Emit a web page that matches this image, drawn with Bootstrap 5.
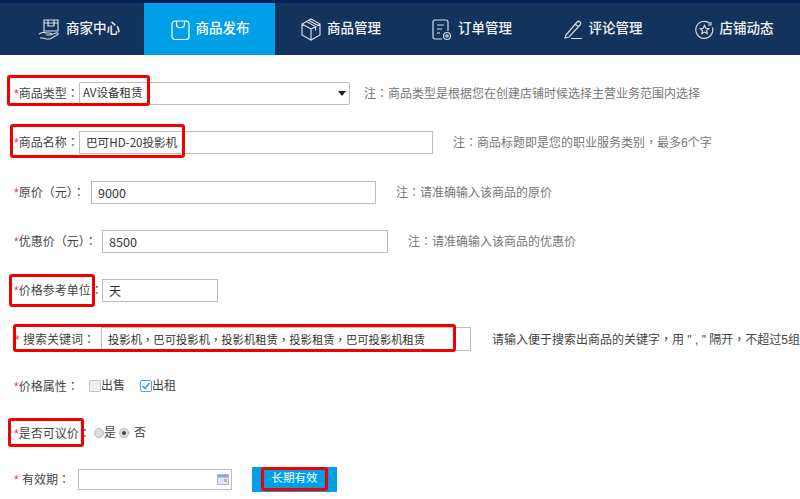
<!DOCTYPE html>
<html>
<head>
<meta charset="utf-8">
<title>商品发布</title>
<link rel="stylesheet" href="https://cdn.jsdelivr.net/npm/bootstrap@5.3.0/dist/css/bootstrap.min.css">
<style>
html,body{height:499px;overflow:hidden;background:#fff}
body{font-family:"Liberation Sans","Noto Sans CJK SC",sans-serif;font-size:12px;color:#333}
.pn{font-family:"Noto Sans CJK TC",sans-serif}
.topbar{height:55px;background:#12335c;border-top:3px solid #071f57;padding-left:13px;flex-wrap:nowrap;width:800px;overflow:hidden}
.topbar .nav-item{flex:0 0 131px}
.topbar .nav-link{height:52px;padding:1px 0 0 1px;color:#f2f5f8;font-size:13.5px;font-weight:500;display:flex;align-items:center;justify-content:center;gap:6px;white-space:nowrap}
.topbar .nav-link.active{background:#00a0e9;color:#fff}
.topbar svg{fill:none;stroke:#d5dce5;stroke-width:1.2;flex:none}
.topbar .active svg{stroke:#fff}
.sheet{position:relative;padding-top:26px;height:444px}
.line{height:24px;margin-bottom:25px;white-space:nowrap}
.line.shift1{margin-bottom:26px}
.line.gap23{margin-bottom:23px}
.line.gap22{margin-bottom:22px}
.tag{color:#444;flex:none;font-size:12px}
.tag i{color:#e4393c;font-style:normal}
.l65{width:79px;padding-left:14px}
.l77{width:91px;padding-left:14px}
.l88{width:102px;padding-left:14px}
.l87{width:101px;padding-left:15px}
.lab-attr{width:89px;padding-left:14px}
.lab-neg{width:94px;padding-left:14px}
.lab-exp{width:78px;padding-left:14px}
.field{height:23px;border:1px solid #bdbdbd;border-radius:0;padding:0 6px;font-size:12px;color:#333;background:#fff;flex:none;font-family:"Noto Sans CJK SC",sans-serif;box-shadow:none}
.w-type{width:271px;padding:0 3px;font-size:11.5px;border-radius:2px}
.w-name{width:354px;font-size:11.6px}
.w-orig{width:285px;font-size:12.6px}
.w-disc{width:286px;font-size:12.6px}
.w-unit{width:116px}
.w-key{width:370px;height:24px;font-size:11.33px;font-family:"Noto Sans CJK TC",sans-serif}
.w-exp{width:154px;height:21px;position:relative}
.hint{color:#777;margin-left:14px}
.hint-n{margin-left:20px}
.hint-k{margin-left:21px;color:#444}
.selwrap{position:relative;flex:none}
.selwrap select{appearance:none;display:block}
.selwrap b{position:absolute;right:4px;top:9px;border:4px solid transparent;border-top:5px solid #222;border-bottom:0}
.tick{width:12px;height:12px;border:1px solid #c4c4c4;background:#efefef;border-radius:2px;flex:none;display:block}
.tick.on{border-color:#4aa8e0;background:#fff}
.tick svg{display:block}
.opt{display:flex;align-items:center;color:#444}
.opt-rent{margin-left:15px}
.dot{width:10px;height:10px;border-radius:50%;background:#ddd;border:1px solid #bbb;flex:none;display:flex;align-items:center;justify-content:center}
.dot.on::after{content:"";width:4px;height:4px;border-radius:50%;background:#444}
.opt-no{margin-left:3px}
.no-txt{margin-left:5px}
.cal{position:absolute;right:2px;top:4px}
.long-btn{margin-left:20px;width:85px;height:25px;background:#00a0e9;color:#fff;border:0;border-radius:0;font-size:11.5px;padding:0;--bs-btn-hover-bg:#00a0e9}
.redbox{position:absolute;border:3px solid #f00000;border-radius:3px;pointer-events:none}
.r1{left:7px;top:20px;width:143px;height:31px}
.r2{left:10px;top:69px;width:175px;height:34px}
.r3{left:9px;top:219px;width:86px;height:33px}
.r4{left:13px;top:269px;width:443px;height:28px}
.r5{left:8px;top:363px;width:76px;height:29px}
.r6{left:261px;top:412px;width:67px;height:24px}
</style>
</head>
<body>
<ul class="nav topbar">
  <li class="nav-item"><a class="nav-link" href="#">
    <svg width="22" height="24" viewBox="0 0 22 24"><path d="M6 2h14v11H6zM6 5h14M10 2v6h6V2"/><path d="M1 16c3-2 5-2 7-1h4c2 0 2 2 0 2H8M12 17l6-2c2-.5 3 1 1 2l-7 4H8l-3-1H2"/></svg>
    <span>商家中心</span></a></li>
  <li class="nav-item"><a class="nav-link active" href="#">
    <svg width="19" height="22" viewBox="0 0 19 22"><rect x="1" y="2" width="17" height="18.500" rx="3"/><path d="M5.500 2v3c0 5 8 5 8 0V2"/></svg>
    <span>商品发布</span></a></li>
  <li class="nav-item"><a class="nav-link" href="#">
    <svg width="20" height="23" viewBox="0 0 20 23"><path d="M10 1l9 5v11l-9 5-9-5V6zM1 6l9 5 9-5M10 11v11M5.500 3.500l9 5v4M8 2.500l9 5"/></svg>
    <span>商品管理</span></a></li>
  <li class="nav-item"><a class="nav-link" href="#">
    <svg width="20" height="22" viewBox="0 0 20 22"><path d="M10 20H3a2 2 0 0 1-2-2V3a2 2 0 0 1 2-2h11a2 2 0 0 1 2 2v9M5 6h7M5 10h5M5 14h3"/><circle cx="15" cy="17" r="3.500"/><circle cx="15" cy="17" r="1.200"/></svg>
    <span>订单管理</span></a></li>
  <li class="nav-item"><a class="nav-link" href="#">
    <svg width="19" height="20" viewBox="0 0 19 20"><path d="M2 15L13 2c1-1 2-1 3 0s1 2 0 3L5 17l-4 1zM11 4l4 3M7 18.500h11"/></svg>
    <span>评论管理</span></a></li>
  <li class="nav-item"><a class="nav-link" href="#">
    <svg width="19" height="20" viewBox="0 0 19 20"><path d="M15 3.500a8.500 8.500 0 1 0 2.500 4"/><path d="M9.500 5.500l1.300 2.800 3 .3-2.200 2 .6 3-2.700-1.500-2.700 1.500.6-3-2.200-2 3-.3z"/><path d="M16 2v3h-3"/></svg>
    <span>店铺动态</span></a></li>
</ul>

<form class="sheet">
  <div class="line d-flex align-items-center">
    <label class="tag l65"><i>*</i>商品类型<span class="pn">：</span></label>
    <div class="selwrap"><select class="field w-type"><option>AV设备租赁</option></select><b></b></div>
    <span class="hint">注<span class="pn">：</span>商品类型是根据您在创建店铺时候选择主营业务范围内选择</span>
  </div>
  <div class="line shift1 d-flex align-items-center">
    <label class="tag l65"><i>*</i>商品名称<span class="pn">：</span></label>
    <input class="field w-name" value="巴可HD-20投影机">
    <span class="hint hint-n">注<span class="pn">：</span>商品标题即是您的职业服务类别<span class="pn">，</span>最多6个字</span>
  </div>
  <div class="line d-flex align-items-center">
    <label class="tag l77"><i>*</i>原价<span class="pn">（</span>元<span class="pn">）：</span></label>
    <input class="field w-orig" value="9000">
    <span class="hint hint-n">注<span class="pn">：</span>请准确输入该商品的原价</span>
  </div>
  <div class="line d-flex align-items-center">
    <label class="tag l88"><i>*</i>优惠价<span class="pn">（</span>元<span class="pn">）：</span></label>
    <input class="field w-disc" value="8500">
    <span class="hint hint-n">注<span class="pn">：</span>请准确输入该商品的优惠价</span>
  </div>
  <div class="line d-flex align-items-center">
    <label class="tag l88"><i>*</i>价格参考单位<span class="pn">：</span></label>
    <input class="field w-unit" value="天">
  </div>
  <div class="line gap23 d-flex align-items-center">
    <label class="tag l87"><i>*</i> 搜索关键词<span class="pn">：</span></label>
    <input class="field w-key" value="投影机，巴可投影机，投影机租赁，投影租赁，巴可投影机租赁">
    <span class="hint hint-k">请输入便于搜索出商品的关键字<span class="pn">，</span>用 " , " 隔开<span class="pn">，</span>不超过5组</span>
  </div>
  <div class="line gap23 d-flex align-items-center">
    <span class="tag lab-attr"><i>*</i>价格属性<span class="pn">：</span></span>
    <span class="opt"><span class="tick"></span>出售</span>
    <span class="opt opt-rent"><span class="tick on"><svg width="10" height="10" viewBox="0 0 10 10"><path d="M1.500 5l2.500 2.500L8.500 2" fill="none" stroke="#2f9be0" stroke-width="1.600"/></svg></span>出租</span>
  </div>
  <div class="line gap22 d-flex align-items-center">
    <span class="tag lab-neg"><i>*</i>是否可议价<span class="pn">：</span></span>
    <span class="opt"><span class="dot"></span>是</span>
    <span class="opt opt-no"><span class="dot on"></span><span class="no-txt">否</span></span>
  </div>
  <div class="line d-flex align-items-center">
    <label class="tag lab-exp"><i>*</i> 有效期<span class="pn">：</span></label>
    <span class="field w-exp"><svg class="cal" width="12" height="11" viewBox="0 0 12 11"><rect x=".5" y=".5" width="11" height="10" fill="#dfe6f2" stroke="#a9bbd8"/><rect x="1" y="1" width="10" height="2.500" fill="#8ea7cf"/><rect x="7" y="5" width="3" height="3" fill="#e9a98a"/></svg></span>
    <button type="button" class="btn long-btn">长期有效</button>
  </div>

  <div class="redbox r1"></div>
  <div class="redbox r2"></div>
  <div class="redbox r3"></div>
  <div class="redbox r4"></div>
  <div class="redbox r5"></div>
  <div class="redbox r6"></div>
</form>
<script src="https://cdn.jsdelivr.net/npm/bootstrap@5.3.0/dist/js/bootstrap.bundle.min.js"></script>
</body>
</html>
